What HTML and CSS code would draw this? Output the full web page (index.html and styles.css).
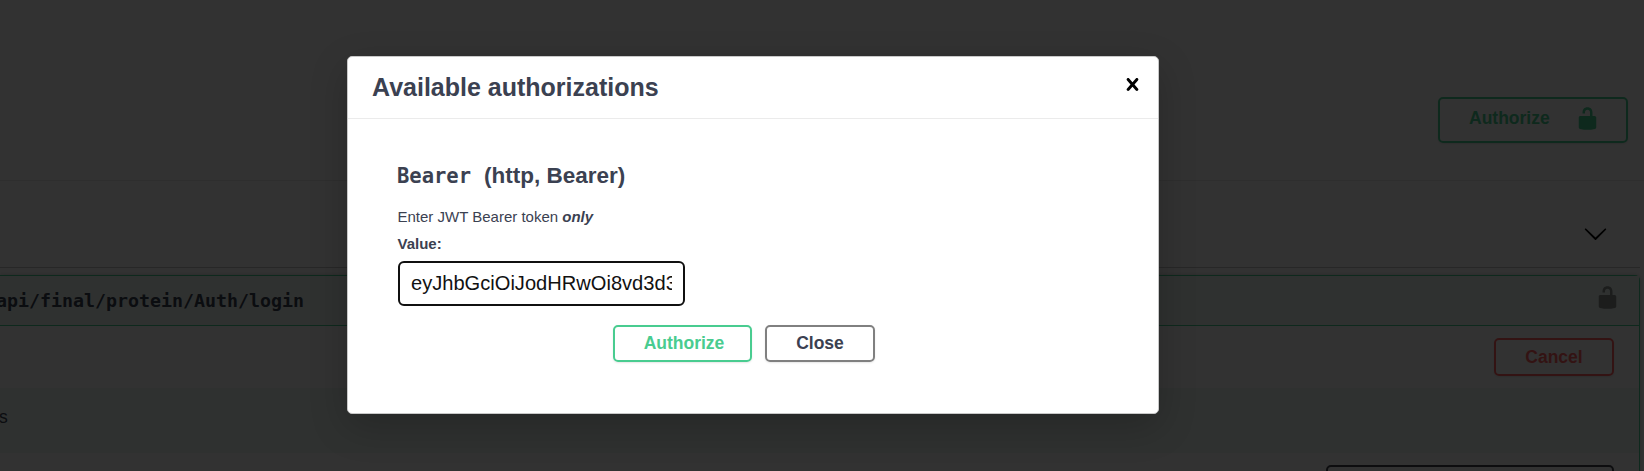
FILE: index.html
```
<!DOCTYPE html>
<html lang="en">
<head>
<meta charset="utf-8">
<title>Available authorizations</title>
<link rel="stylesheet" href="styles.css">
</head>
<body>
<svg class="defs" width="0" height="0">
  <symbol id="unlocked" viewBox="0 0 20 20"><path d="M15.8 8H14V5.6C14 2.703 12.665 1 10 1 7.334 1 6 2.703 6 5.6V6h2v-.801C8 3.754 8.797 3 10 3c1.203 0 2 .754 2 2.199V8H4c-.553 0-1 .646-1 1.199V17c0 .549.428 1.139.951 1.307l1.197.387C5.672 18.861 6.55 19 7.1 19h5.8c.549 0 1.428-.139 1.951-.307l1.196-.387c.524-.167.953-.757.953-1.306V9.199C17 8.646 16.352 8 15.8 8z"/></symbol>
</svg>
<main class="page">
  <section class="scheme">
    <button class="btn btn-auth btn-top"><span>Authorize</span><svg class="icon"><use href="#unlocked"/></svg></button>
  </section>
  <section class="tag">
    <svg class="icon" viewBox="0 0 20 20"><path d="M17.418 6.109c.272-.268.709-.268.979 0s.271.701 0 .969l-7.908 7.83c-.27.268-.707.268-.979 0l-7.908-7.83c-.27-.268-.27-.701 0-.969.271-.268.709-.268.979 0L10 13.25l7.418-7.141z"/></svg>
  </section>
  <section class="opblock">
    <div class="summary"><span class="path">api/final/protein/Auth/login</span><svg class="icon lock"><use href="#unlocked"/></svg></div>
    <div class="toolbar"><button class="btn btn-cancel">Cancel</button></div>
    <div class="band"><span>s</span></div>
    <div class="select-row"><div class="select"></div></div>
  </section>
</main>
<div class="backdrop"></div>
<div class="modal">
  <header class="modal-head">
    <h3>Available authorizations</h3>
    <svg class="icon" viewBox="0 0 20 20"><path d="M14.348 14.849c-.469.469-1.229.469-1.697 0L10 11.819l-2.651 3.029c-.469.469-1.229.469-1.697 0-.469-.469-.469-1.229 0-1.697l2.758-3.15-2.759-3.152c-.469-.469-.469-1.228 0-1.697.469-.469 1.228-.469 1.697 0L10 8.183l2.651-3.031c.469-.469 1.228-.469 1.697 0 .469.469.469 1.229 0 1.697l-2.758 3.152 2.758 3.15c.469.469.469 1.229 0 1.698z"/></svg>
  </header>
  <div class="modal-body">
    <h4><code>Bearer</code><span>(http, Bearer)</span></h4>
    <p class="desc">Enter JWT Bearer token <em>only</em></p>
    <label class="label">Value:</label>
    <div class="field"><div class="value">eyJhbGciOiJodHRwOi8vd3d3</div></div>
    <div class="actions">
      <button class="btn btn-auth">Authorize</button>
      <button class="btn btn-close">Close</button>
    </div>
  </div>
</div>
</body>
</html>
```
FILE: styles.css
```
* { box-sizing: border-box; }
body {
  margin: 0;
  width: 1644px;
  height: 471px;
  overflow: hidden;
  position: relative;
  background: #fafafa;
  color: #3b4151;
  font-family: "Liberation Sans", Arial, sans-serif;
}
.defs { position: absolute; }
.icon { display: block; width: 25px; height: 25px; flex: none; }

.btn {
  display: flex;
  align-items: center;
  justify-content: center;
  height: 38px;
  padding: 0 0 1px;
  border: 2px solid #808080;
  border-radius: 5px;
  background: transparent;
  box-shadow: 0 1px 2px rgba(0, 0, 0, .1);
  color: #3b4151;
  font: bold 17.5px "Liberation Sans", Arial, sans-serif;
}
.btn-auth { border-color: #49cc90; color: #49cc90; fill: #49cc90; }
.btn-cancel { width: 120px; border-color: #ff6060; color: #ff6060; padding: 1px 0 0; }

.page { height: 471px; overflow: hidden; }
.scheme {
  display: flex;
  justify-content: flex-end;
  height: 181px;
  padding: 97px 16px 0 0;
  border-bottom: 1px solid #e4e4e4;
}
.btn-top {
  width: 190px;
  height: 46px;
  justify-content: space-between;
  padding: 0 26px 4px 29px;
}
.tag {
  display: flex;
  justify-content: flex-end;
  height: 87px;
  width: 1640px;
  padding: 40px 32px 0 0;
  border-bottom: 1px solid #c0c0c4;
}
.opblock {
  width: 1640px;
  height: 220px;
  margin-top: 7px;
  border: 1px solid #49cc90;
  border-left: 0;
  border-radius: 0 5px 0 0;
  box-shadow: 0 0 4px rgba(0, 0, 0, .19);
}
.summary {
  display: flex;
  align-items: center;
  justify-content: space-between;
  height: 50px;
  padding-right: 19px;
  border-bottom: 1px solid #49cc90;
  background: #e9f4ef;
}
.path { margin-left: -4px; font: bold 18.27px "DejaVu Sans Mono", monospace; }
.lock { margin-bottom: 6px; opacity: .4; }
.toolbar {
  display: flex;
  justify-content: flex-end;
  height: 62px;
  padding: 12px 25px 0 0;
}
.band { height: 65px; padding: 18px 0 0; background: #e9f4ef; font-size: 17.5px; line-height: 22px; }
.band span { margin-left: -1px; }
.select-row { display: flex; justify-content: flex-end; padding: 12px 25px 0 0; }
.select { width: 288px; height: 48px; border: 2px solid #41444e; border-radius: 5px; }

.backdrop { position: absolute; inset: 0; background: rgba(0, 0, 0, .8); }
.modal {
  position: absolute;
  left: 347px;
  top: 56px;
  width: 812px;
  height: 358px;
  border: 1px solid #c8c8c8;
  border-radius: 5px;
  background: #fff;
  box-shadow: 0 12px 38px rgba(0, 0, 0, .2);
}
.modal-head {
  display: flex;
  align-items: center;
  justify-content: space-between;
  height: 62px;
  padding: 0 13px 6px 24px;
  border-bottom: 1px solid #ebebeb;
}
.modal-head h3 { margin: 5px 0 0; font-size: 25px; line-height: 30px; }
.modal-body { padding: 42px 50px 0; }
h4 { display: flex; align-items: baseline; gap: 13px; margin: 0 0 0 -1px; font-size: 22.5px; line-height: 30px; }
h4 code { font: bold 20.5px/30px "DejaVu Sans Mono", monospace; }
.desc { margin: 16px 0 0 -.5px; font-size: 15px; line-height: 20px; }
.desc em { font-weight: bold; }
.label { display: block; margin: 7px 0 0 -.5px; font-size: 15px; font-weight: bold; line-height: 20px; }
.field {
  width: 287px;
  height: 45px;
  margin-top: 7px;
  padding: 0 11px;
  border: 2px solid #101010;
  border-radius: 6px;
  color: #111;
}
.value { overflow: hidden; font-size: 20.1px; line-height: 41px; white-space: nowrap; }
.actions { display: flex; gap: 13px; margin: 19px 0 0 215px; }
.actions .btn { height: 37px; }
.actions .btn-auth { width: 139px; padding-left: 3px; }
.actions .btn-close { width: 110px; padding-bottom: 0; }
```
